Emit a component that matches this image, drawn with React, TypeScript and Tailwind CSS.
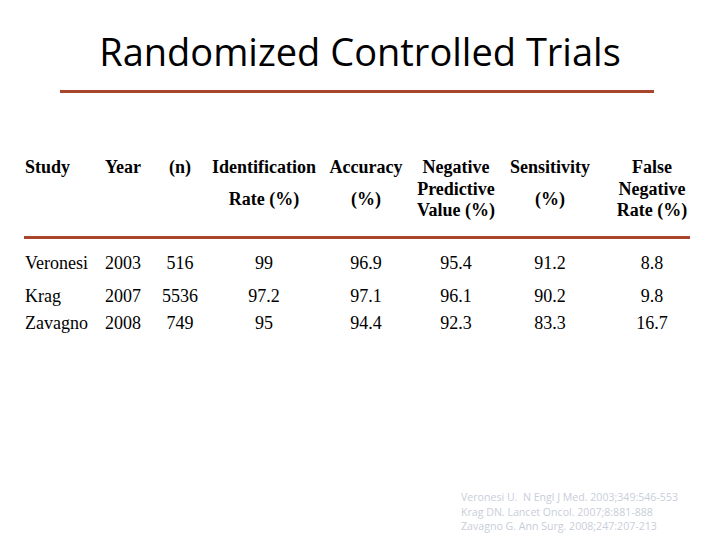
const serif = { fontFamily: '"Liberation Serif", "Times New Roman", serif' };

const cols = [
  'w-[77px] text-left',
  'w-[56px] text-left pl-[3px]',
  'w-[44px] text-center',
  'w-[124px] text-center',
  'w-[80px] text-center',
  'w-[100px] text-center',
  'w-[88px] text-center',
  'w-[116px] text-center',
];

const header: { top: string; rest: string[] }[] = [
  { top: 'Study', rest: [] },
  { top: 'Year', rest: [] },
  { top: '(n)', rest: [] },
  { top: 'Identification', rest: ['Rate (%)'] },
  { top: 'Accuracy', rest: ['(%)'] },
  { top: 'Negative', rest: ['Predictive', 'Value (%)'] },
  { top: 'Sensitivity', rest: ['(%)'] },
  { top: 'False', rest: ['Negative', 'Rate (%)'] },
];

const rows = [
  { gap: 'mt-0', cells: ['Veronesi', '2003', '516', '99', '96.9', '95.4', '91.2', '8.8'] },
  { gap: 'mt-[12px]', cells: ['Krag', '2007', '5536', '97.2', '97.1', '96.1', '90.2', '9.8'] },
  { gap: 'mt-[6px]', cells: ['Zavagno', '2008', '749', '95', '94.4', '92.3', '83.3', '16.7'] },
];

export default function App() {
  return (
    <div className="w-[720px] h-[540px] bg-white overflow-hidden flex flex-col">
      <h1
        className="mt-[29px] text-center text-[38px] leading-[44px] text-black"
        style={{ fontFamily: '"Open Sans", sans-serif' }}
      >
        Randomized Controlled Trials
      </h1>
      <div className="ml-[60px] mt-[17px] w-[594px] h-[3px] bg-[#a8452a]" />

      <div className="ml-[25px] mt-[63px] flex font-bold text-[18px] text-black" style={serif}>
        {header.map((h, i) => (
          <div key={i} className={`${cols[i]} flex flex-col`}>
            <div className="h-[22px] leading-[22px] whitespace-nowrap">{h.top}</div>
            <div className="h-[43px] flex flex-col justify-center">
              {h.rest.map((r) => (
                <div key={r} className="leading-[21px] whitespace-nowrap">
                  {r}
                </div>
              ))}
            </div>
          </div>
        ))}
      </div>
      <div className="ml-[24px] mt-[15px] w-[666px] h-[3px] bg-[#a8452a]" />

      <div className="ml-[25px] mt-[14px] text-[18px] text-black" style={serif}>
        {rows.map((r, ri) => (
          <div key={ri} className={`${r.gap} flex leading-[21px]`}>
            {r.cells.map((c, ci) => (
              <div key={ci} className={`${cols[ci]} whitespace-nowrap`}>
                {c}
              </div>
            ))}
          </div>
        ))}
      </div>

      <div
        className="ml-[461px] mt-[156px] text-[10.6px] leading-[14.5px] text-[#c9ced9]"
        style={{ fontFamily: '"Open Sans", sans-serif' }}
      >
        <div>Veronesi U.&nbsp; N Engl J Med. 2003;349:546-553</div>
        <div>Krag DN. Lancet Oncol. 2007;8:881-888</div>
        <div>Zavagno G. Ann Surg. 2008;247:207-213</div>
      </div>
    </div>
  );
}
